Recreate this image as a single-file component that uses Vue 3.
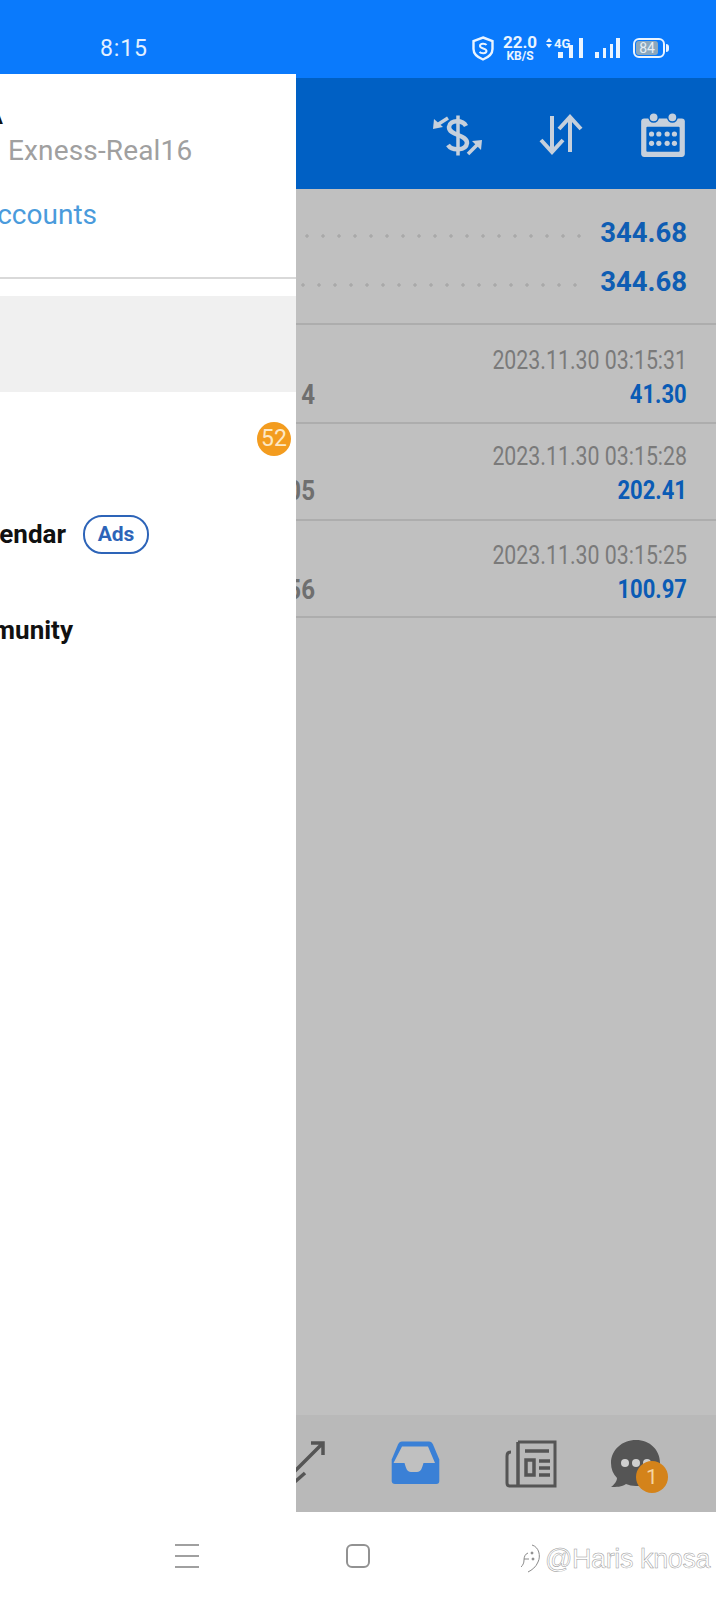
<script setup>
const summary = ['344.68', '344.68']
const rows = [
  { num: '4', date: '2023.11.30 03:15:31', value: '41.30' },
  { num: '05', date: '2023.11.30 03:15:28', value: '202.41' },
  { num: '56', date: '2023.11.30 03:15:25', value: '100.97' }
]
</script>

<template>
  <div class="screen">
    <header class="status">
      <span class="time">8:15</span>
      <div class="status-icons">
        <svg width="22" height="25" viewBox="0 0 22 25" fill="none" stroke="#eaf4ff">
          <path d="M11 1.500 20.500 5v8c0 5.500-4.500 8.500-9.500 10.500C6 21.500 1.500 18.500 1.500 13V5z" stroke-width="2.400"/>
          <path d="M14.500 9c-1-1.500-6.500-2-6.500 1s6.500 2 6.500 5-5.500 2.500-7 1" stroke-width="2"/>
        </svg>
        <div class="speed"><span class="speed-num">22.0</span><span class="speed-unit">KB/S</span></div>
        <svg class="sim" width="38" height="24" viewBox="0 0 38 24" fill="#eaf4ff">
          <path d="M3 2 6 6H0zM3 12 0 8h6z"/>
          <text x="8" y="12" font-family="Roboto" font-weight="700" font-size="13">4G</text>
          <rect x="12" y="16" width="5" height="6"/><rect x="23" y="9" width="4" height="13"/>
          <rect x="33" y="2" width="4" height="20"/>
        </svg>
        <svg class="sim" width="26" height="24" viewBox="0 0 26 24" fill="#eaf4ff">
          <rect x="0" y="16" width="4" height="6"/><rect x="8" y="12" width="3" height="10"/>
          <rect x="15" y="8" width="3" height="14"/><rect x="21" y="2" width="4" height="20"/>
        </svg>
        <div class="battery"><div class="battery-fill">84</div><i class="nub"></i></div>
      </div>
    </header>

    <div class="toolbar">
      <svg width="52" height="50" viewBox="0 0 52 50" fill="none" stroke="#c6d0dc">
        <path d="M35 17C32 11 19 10 18 18 18 27 36 25 36 34 35 42 21 42 17 36" stroke-width="4.500"/>
        <path d="M27 6.500v40" stroke-width="3.500"/>
        <path d="M17 9 6 16" stroke-width="3.500"/>
        <path d="M2 20 3 10 12 18z" fill="#c6d0dc" stroke="none"/>
        <path d="M37 45 46 36" stroke-width="3.500"/>
        <path d="M51 31 41 32 50 41z" fill="#c6d0dc" stroke="none"/>
      </svg>
      <svg class="tool-arrows" width="50" height="50" viewBox="0 0 50 50" fill="none" stroke="#c6d0dc" stroke-width="4">
        <path d="M16 7v36M5 31l11 12 11-12"/>
        <path d="M34 43V9M23 20 34 8l11 12"/>
      </svg>
      <svg class="tool-cal" width="52" height="52" viewBox="0 0 50 50">
        <path d="M7 10h36a3 3 0 0 1 3 3v31a3 3 0 0 1-3 3H7a3 3 0 0 1-3-3V13a3 3 0 0 1 3-3z" fill="#c6d0dc"/>
        <rect x="9" y="18" width="32" height="24" rx="1" fill="#0060c4"/>
        <circle cx="16" cy="9" r="4.500" fill="#c6d0dc" stroke="#0060c4" stroke-width="1.500"/>
        <circle cx="34" cy="9" r="4.500" fill="#c6d0dc" stroke="#0060c4" stroke-width="1.500"/>
        <g fill="#c6d0dc">
          <circle cx="14" cy="25" r="2.500"/><circle cx="21" cy="25" r="2.500"/><circle cx="29" cy="25" r="2.500"/><circle cx="36" cy="25" r="2.500"/>
          <circle cx="14" cy="34" r="2.500"/><circle cx="21" cy="34" r="2.500"/><circle cx="29" cy="34" r="2.500"/><circle cx="36" cy="34" r="2.500"/>
        </g>
      </svg>
    </div>

    <main class="content">
      <section class="summary">
        <div v-for="(value, i) in summary" :key="i" class="summary-row">
          <div class="dots"></div>
          <span class="summary-value">{{ value }}</span>
        </div>
      </section>
      <section v-for="row in rows" :key="row.date" class="row">
        <div class="date">{{ row.date }}</div>
        <div class="row-bottom">
          <span class="num">{{ row.num }}</span>
          <span class="value">{{ row.value }}</span>
        </div>
      </section>
    </main>

    <nav class="tabs">
      <svg class="tab tab-trade" width="60" height="60" viewBox="0 0 60 60" fill="none" stroke="#555" stroke-width="3.500">
        <path d="M22 41 53 10M42 9h12v12"/>
        <path d="M36 39 20 53"/>
      </svg>
      <svg class="tab" width="60" height="60" viewBox="0 0 60 60">
        <path d="M17 7.500h27c2 0 3 1 4 3l6.300 15V47c0 2-1 3-3 3H10c-2 0-3.300-1-3.300-3V25.500l6.300-15c1-2 2-3 4-3z" fill="#3a80d6"/>
        <path d="M17 12.500h26l7 16.500H38.500C37 34 36 38 32 38h-6c-4 0-5-4-6.500-9H8.500z" fill="#c0c0c0"/>
      </svg>
      <svg class="tab tab-news" width="60" height="60" viewBox="0 0 60 60" fill="none" stroke="#555">
        <path d="M17 8h37v44H9c-2 0-3-1-3-3V22c0-2 1-4 4-4" stroke-width="3"/>
        <path d="M17 8v44" stroke-width="3.500"/>
        <path d="M24 17h24" stroke-width="3.500"/>
        <rect x="25" y="26" width="8" height="15" stroke-width="3.500"/>
        <path d="M38 27h11M38 34h11M38 41h11" stroke-width="3.500"/>
      </svg>
      <svg class="tab" width="60" height="60" viewBox="0 0 60 60">
        <path d="M26 6c14 0 24 10 24 23S40 52 26 52c-4 0-7-1-10-2-4 3-10 3-15 3 3-2 6-6 6-9C3 40 1 35 1 29 1 16 12 6 26 6z" fill="#555"/>
        <circle cx="15" cy="29" r="4" fill="#cfcfcf"/><circle cx="26" cy="29" r="4" fill="#cfcfcf"/><circle cx="37" cy="29" r="4" fill="#cfcfcf"/>
        <circle cx="42" cy="43" r="16" fill="#d4831a"/>
        <text x="42" y="50" text-anchor="middle" font-family="Roboto" font-size="21" fill="#f5d5a0">1</text>
      </svg>
    </nav>

    <footer class="navbar">
      <div class="burger"><i></i><i></i><i></i></div>
      <div class="square"></div>
      <div class="mark">
        <svg width="20" height="30" viewBox="0 0 20 30" fill="none" stroke="#8a8a8a" stroke-width="1">
          <path d="M11 1c7 2 9 11 6 17-2 5-6 8-10 10M7 9c-3 1-4 4-4 7 0 3-1 5-3 7M3 15h5"/>
          <circle cx="11" cy="9" r="1" fill="#8a8a8a"/><circle cx="12" cy="15" r="1" fill="#8a8a8a"/>
        </svg>
        <span class="mark-text">@Haris knosa</span>
      </div>
    </footer>

    <aside class="drawer">
      <div class="account">
        <div class="name">MetaTrader A</div>
        <div class="server">Exness-Real16</div>
        <div class="manage">Manage accounts</div>
      </div>
      <div class="item selected"></div>
      <div class="item"><span class="badge">52</span></div>
      <div class="item tight"><span class="label">Economic Calendar</span><span class="ads">Ads</span></div>
      <div class="item tight"><span class="label">Traders Community</span></div>
    </aside>
  </div>
</template>

<style>
html, body { margin: 0; background: #fff; }
</style>

<style scoped>
.screen {
  position: relative;
  width: 716px;
  height: 1600px;
  display: flex;
  flex-direction: column;
  overflow: hidden;
  font-family: Roboto, "Liberation Sans", sans-serif;
}
.status {
  height: 60px;
  padding: 18px 51px 0 100px;
  display: flex;
  align-items: center;
  justify-content: space-between;
  background: #0a7afc;
  color: #e3f0ff;
}
.time { font-size: 23px; letter-spacing: 0.9px; }
.status-icons { display: flex; align-items: center; }
.speed { display: flex; flex-direction: column; align-items: center; width: 32px; margin: 0 10px; color: #eaf4ff; font-weight: 700; }
.speed-num { font-size: 17px; line-height: 15px; }
.speed-unit { font-size: 12px; line-height: 12px; }
.sim + .sim { margin-left: 11px; }
.battery {
  position: relative;
  width: 26px;
  height: 14px;
  margin-left: 12px;
  padding: 1px;
  border: 2px solid #eaf4ff;
  border-radius: 6px;
  box-sizing: content-box;
}
.battery-fill {
  width: 22px;
  height: 14px;
  background: #8aa7bd;
  border-radius: 3px;
  font-size: 14px;
  line-height: 14px;
  text-align: center;
  color: #e6eef5;
}
.nub {
  position: absolute;
  right: -6px;
  top: 4px;
  width: 3px;
  height: 8px;
  background: #eaf4ff;
  border-radius: 0 3px 3px 0;
}
.toolbar {
  height: 111px;
  padding-right: 27px;
  display: flex;
  align-items: center;
  justify-content: flex-end;
  background: #0060c4;
}
.tool-arrows { margin-left: 53px; }
.tool-cal { margin-left: 51px; }
.content { flex: 1; background: #c0c0c0; }
.summary {
  padding-top: 19px;
  box-sizing: border-box;
  height: 136px;
  border-bottom: 2px solid #adadad;
}
.summary-row {
  height: 49px;
  padding-right: 29px;
  display: flex;
  align-items: center;
}
.dots {
  flex: 1;
  height: 4px;
  margin: 6px 18px 0 0;
  background: radial-gradient(circle, #a9a9a9 1.4px, transparent 2px) -5px 0 / 16px 4px;
}
.summary-row + .summary-row .dots { background-position: 7px 0; }
.summary-value { font-size: 27.500px; font-weight: 700; color: #0f5db3; }
.row {
  height: 97px;
  box-sizing: border-box;
  padding: 19px 29px 0 0;
  border-bottom: 2px solid #adadad;
}
.row:nth-child(2) { height: 99px; padding-top: 20px; }
.row:nth-child(3) { padding-top: 17px; }
.row:nth-child(4) { padding-top: 19px; }
.date {
  text-align: right;
  font-size: 26px;
  line-height: 30px;
  color: #7a7a7a;
  transform: scaleX(0.82);
  transform-origin: right center;
}
.row-bottom { display: flex; justify-content: space-between; margin-top: 3px; }
.num {
  width: 315px;
  text-align: right;
  font-size: 28px;
  line-height: 34px;
  font-weight: 700;
  color: #6f6f6f;
  transform: scaleX(0.86);
  transform-origin: right center;
}
.value {
  font-size: 25px;
  line-height: 34px;
  font-weight: 700;
  color: #0a5bb5;
  transform: scaleX(0.88);
  transform-origin: right center;
}
.tabs {
  height: 97px;
  padding-right: 46px;
  display: flex;
  align-items: center;
  justify-content: flex-end;
  background: #b9b9b9;
}
.tab { margin-left: 56px; }
.tab-news + .tab { margin-left: 49px; }
.navbar {
  position: relative;
  height: 88px;
  background: #fff;
  display: flex;
  align-items: center;
}
.burger {
  margin-left: 175px;
  width: 24px;
  height: 24px;
  display: flex;
  flex-direction: column;
  justify-content: space-between;
}
.burger i { display: block; height: 2px; background: #a0a0a0; }
.square {
  margin-left: 147px;
  width: 20px;
  height: 20px;
  border: 2px solid #929292;
  border-radius: 6px;
}
.mark {
  margin-left: 151px;
  display: flex;
  align-items: center;
  gap: 4px;
  margin-top: 6px;
}
.mark-text {
  font-family: "Liberation Sans", sans-serif;
  font-size: 27px;
  letter-spacing: -0.400px;
  color: #fff;
  -webkit-text-stroke: 0.500px #9a9a9a;
  white-space: nowrap;
}
.drawer {
  position: absolute;
  left: 0;
  top: 74px;
  width: 296px;
  height: 1438px;
  background: #fff;
  overflow: hidden;
}
.account {
  height: 205px;
  box-sizing: border-box;
  border-bottom: 2px solid #d9d9d9;
  margin-bottom: 17px;
  padding-top: 17px;
}
.name {
  height: 30px;
  font-size: 24px;
  line-height: 30px;
  font-weight: 700;
  color: #111;
  width: 3px;
  display: flex;
  justify-content: flex-end;
  white-space: nowrap;
  margin-top: 10px;
  margin-bottom: 2px;
}
.server {
  padding-left: 8px;
  font-size: 28px;
  letter-spacing: 0.150px;
  line-height: 36px;
  color: #a0a0a0;
  white-space: nowrap;
}
.manage {
  margin-top: 28px;
  width: 97px;
  display: flex;
  justify-content: flex-end;
  font-size: 28px;
  line-height: 36px;
  color: #4a9bdc;
  white-space: nowrap;
}
.item {
  position: relative;
  height: 96px;
  display: flex;
  align-items: center;
}
.tight { padding-bottom: 4px; box-sizing: border-box; }
.selected { background: #f0f0f0; }
.badge {
  position: absolute;
  left: 257px;
  top: 30px;
  width: 34px;
  height: 34px;
  border-radius: 50%;
  background: #f39c1f;
  color: #fde8c4;
  font-size: 23px;
  line-height: 34px;
  text-align: center;
}
.label {
  width: 66px;
  flex: none;
  display: flex;
  justify-content: flex-end;
  white-space: nowrap;
  font-size: 26px;
  font-weight: 700;
  color: #111;
}
.item:last-child .label { width: 73px; }
.ads {
  margin-left: 17px;
  width: 62px;
  height: 35px;
  border: 2px solid #2d64b8;
  border-radius: 19px;
  text-align: center;
  font-size: 21px;
  font-weight: 700;
  line-height: 35px;
  color: #2d64b8;
}
</style>
